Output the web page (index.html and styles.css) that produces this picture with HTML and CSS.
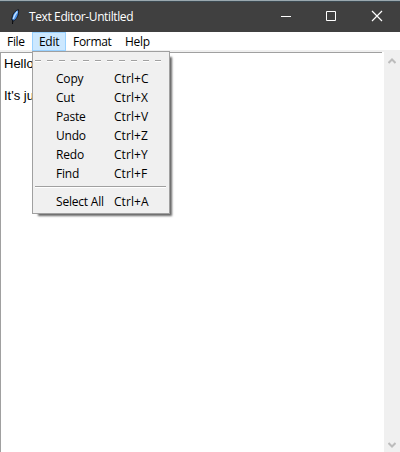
FILE: index.html
```html
<!DOCTYPE html>
<html lang="en">
<head>
<meta charset="utf-8">
<title>Text Editor-Untiltled</title>
<link rel="stylesheet" href="styles.css">
</head>
<body>
<div class="window">
  <header class="titlebar">
    <svg class="feather" width="10" height="16" viewBox="0 0 10 16">
      <path d="M8.500 .7C5.500 1.200 2 5 1.800 11L3 12.200C6.500 10.800 9 6 8.500 .7Z" fill="#4b92ea" stroke="#0b0b10" stroke-width=".8"/>
      <path d="M7.300 2.500C5.500 4.500 4 7 3.200 10" fill="none" stroke="#c4e2ff" stroke-width="1.200"/>
      <path d="M2.900 10.500L2.500 15" fill="none" stroke="#08080c" stroke-width="1"/>
    </svg>
    <h1 class="title">Text Editor-Untiltled</h1>
    <div class="controls">
      <svg class="control" width="46" height="31" viewBox="0 0 46 31"><path d="M19 15.500H29"/></svg>
      <svg class="control" width="46" height="31" viewBox="0 0 46 31"><path d="M18.500 10.500H27.500V19.500H18.500Z"/></svg>
      <svg class="control" width="46" height="31" viewBox="0 0 46 31"><path d="M18 10L28 20M28 10L18 20" stroke-width="1.200"/></svg>
    </div>
  </header>
  <nav class="menubar">
    <span class="menu file">File</span>
    <div class="menu edit open">Edit
      <div class="dropdown">
        <div class="tearoff"></div>
        <div class="item"><span>Copy</span><span class="key">Ctrl+C</span></div>
        <div class="item"><span>Cut</span><span class="key">Ctrl+X</span></div>
        <div class="item"><span>Paste</span><span class="key">Ctrl+V</span></div>
        <div class="item"><span>Undo</span><span class="key">Ctrl+Z</span></div>
        <div class="item"><span>Redo</span><span class="key">Ctrl+Y</span></div>
        <div class="item"><span>Find</span><span class="key">Ctrl+F</span></div>
        <div class="separator"></div>
        <div class="item"><span>Select All</span><span class="key">Ctrl+A</span></div>
      </div>
    </div>
    <span class="menu format">Format</span>
    <span class="menu help">Help</span>
  </nav>
  <main class="workspace">
    <div class="editor"><p>Hello</p><p>It's ju</p></div>
    <div class="scrollbar">
      <svg width="8" height="7" viewBox="0 0 8 7"><path d="M.5 5L4 1.500L7.500 5"/></svg>
      <svg width="8" height="7" viewBox="0 0 8 7"><path d="M.5 2L4 5.500L7.500 2"/></svg>
    </div>
  </main>
</div>
</body>
</html>
```
FILE: styles.css
```css
* { box-sizing: border-box; }
body { margin: 0; overflow: hidden; }
.window {
  display: flex;
  flex-direction: column;
  width: 400px;
  height: 452px;
  background: #f0f0f0;
  font: 12px/18px "Open Sans", "Noto Sans", sans-serif;
  color: #000;
}
.titlebar {
  display: flex;
  align-items: center;
  height: 32px;
  padding-left: 10px;
  border-top: 1px solid #9aa8ae;
  background: linear-gradient(#3c4a52 1px, #404040 1px);
  color: #fff;
}
.feather { flex: none; margin-right: 9px; }
.title {
  flex: 1;
  margin: 0;
  font-size: 12px;
  font-weight: 400;
  letter-spacing: -0.38px;
  white-space: nowrap;
}
.controls { display: flex; }
.control { fill: none; stroke: #fff; stroke-width: 1; }
.menubar {
  display: flex;
  height: 19px;
  background: linear-gradient(#fff 18px, #f0f0f0 18px);
  letter-spacing: -0.3px;
}
.menu { height: 19px; padding-left: 7px; line-height: 19px; white-space: nowrap; }
.file { width: 32px; }
.edit { position: relative; width: 34px; padding-left: 6px; border: 1px solid #99d1ff; background: #cce8ff; line-height: 17px; }
.format { width: 52px; }
.dropdown {
  position: absolute;
  z-index: 1;
  top: 18px;
  left: -1px;
  width: 138px;
  height: 163px;
  padding: 9px 2px 0;
  border: 1px solid #a0a0a0;
  background: #f0f0f0;
  box-shadow: 4px 4px 2px -2px rgba(0, 0, 0, .6);
}
.tearoff {
  height: 9px;
  margin: -1px 6px 0 0;
  background:
    repeating-linear-gradient(90deg, #a0a0a0 0 6px, transparent 6px 12px) 0 0 / 100% 1px no-repeat,
    repeating-linear-gradient(90deg, #fff 0 6px, transparent 6px 12px) 0 1px / 100% 1px no-repeat;
}
.item {
  display: grid;
  grid-template-columns: 58px 1fr;
  height: 19px;
  padding-left: 21px;
  line-height: 19px;
  letter-spacing: -0.2px;
}
.key { letter-spacing: 0.05px; }
.separator { height: 6px; margin: 3px 1px 0 0; border-top: 1px solid #a0a0a0; box-shadow: inset 0 1px #fff; }
.workspace { display: flex; flex: 1; padding-top: 1px; }
.editor {
  flex: 1;
  padding: 4px;
  background:
    linear-gradient(#a0a0a0, #a0a0a0) 0 0 / 382px 1px no-repeat,
    linear-gradient(#a0a0a0, #a0a0a0) 0 0 / 1px 100% no-repeat,
    #fff;
  font: 13px/16px "Liberation Sans", Arial, sans-serif;
}
.editor p { margin: 0 0 16px; }
.scrollbar {
  display: flex;
  flex-direction: column;
  align-items: center;
  justify-content: space-between;
  width: 16px;
  padding: 6px 0 4px;
}
.scrollbar path { fill: none; stroke: #bcbcbc; stroke-width: 2; }
```
